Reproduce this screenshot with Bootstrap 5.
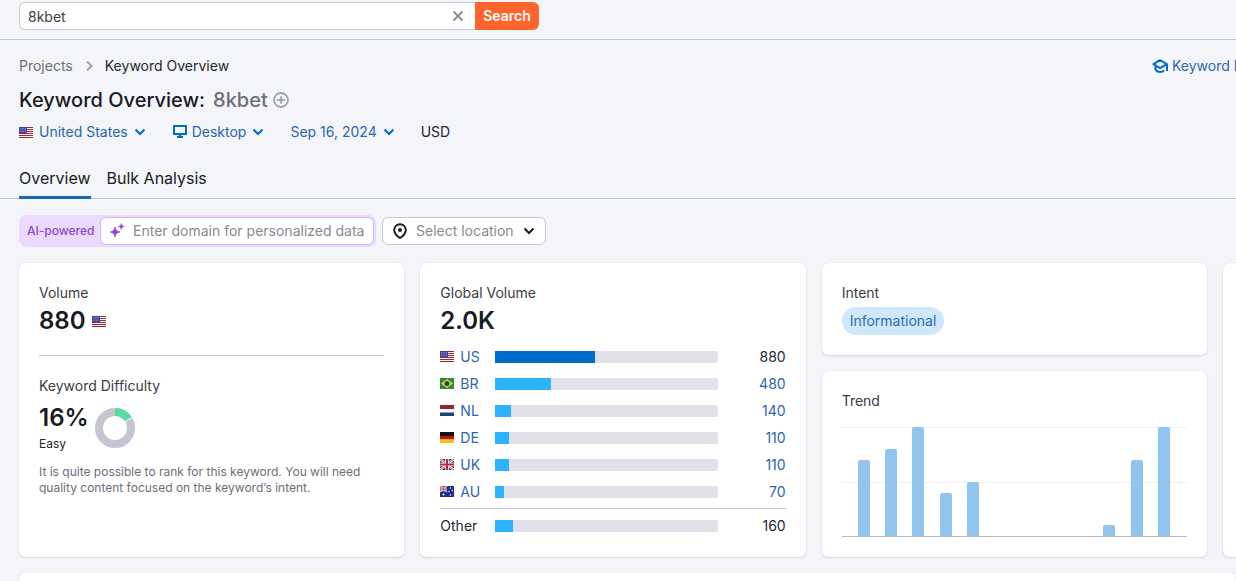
<!DOCTYPE html>
<html lang="en">
<head>
<meta charset="utf-8">
<meta name="viewport" content="width=device-width, initial-scale=1">
<title>Keyword Overview: 8kbet</title>
<link href="https://cdn.jsdelivr.net/npm/bootstrap@5.3.0/dist/css/bootstrap.min.css" rel="stylesheet">
<style>
  body { background: #f4f5f9; color: #25272f; font: 14px/20px Inter, "Liberation Sans", sans-serif; }
  a, .linkish { color: #2b66ae; text-decoration: none; }
  svg { flex: none; display: block; }
  .page-x { padding-left: 19px; }
  .topbar { border-bottom: 1px solid #c4c7cf; padding-top: 2px; padding-bottom: 9px; }
  .search-group { width: 520px; }
  .search-field { position: relative; flex: 1; }
  .search-field input { height: 28px; padding: 0 32px 0 8px; border: 1px solid #c4c7cf; border-right: 0; border-radius: 6px 0 0 6px; font-size: 14px; color: #3a3c45; width: 100%; background: #fff; outline: 0; }
  .clear-btn { position: absolute; right: 9px; top: 6px; color: #8a8e9b; }
  .plain-btn { border: 0; background: none; padding: 0; font-size: 14px; line-height: 20px; }
  .btn-search { background: #ff642d; color: #fff; height: 28px; width: 64px; border: 0; padding: 0; border-radius: 0 6px 6px 0; font-size: 14px; font-weight: 600; line-height: 20px; }
  .muted { color: #6c6e79; }
  .crumbs { padding-top: 16px; }
  .course-link { width: 84px; overflow: hidden; white-space: nowrap; }
  h1 { font-size: 20px; line-height: 24px; font-weight: 500; color: #191b23; }
  .filters { margin-top: 10px; }
  .filter-btn { margin-right: 26px; }
  .gap-after { margin-right: 6px; }
  .gap-before { margin-left: 6px; }
  .icon-blue { color: #006dca; }
  .tabs { border-bottom: 1px solid #c4c7cf; margin-top: 24px; gap: 16px; }
  .tabs a { color: #191b23; font-size: 16px; line-height: 24px; padding-bottom: 6px; margin-bottom: -1px; border-bottom: 3px solid transparent; }
  .tabs a.active { border-color: #1869b3; }
  .tools { padding-top: 16px; padding-bottom: 16px; gap: 6px; }
  .ai-box { background: #ecd9ff; border-radius: 8px; padding: 2px 2px 2px 8px; width: 357px; }
  .ai-label { font-size: 12px; font-weight: 500; color: #8649d1; width: 73px; line-height: 16px; margin-bottom: 1px; }
  .ai-field { background: #fff; border: 1px solid #d6b5f7; border-radius: 6px; height: 28px; padding: 0 7px 0 8px; }
  .ai-field input { border: 0; padding: 0; outline: 0; width: 100%; font-size: 14px; line-height: 20px; background: none; }
  .ai-field input::placeholder { color: #878a94; opacity: 1; }
  .location-btn { height: 28px; width: 164px; border: 1px solid #c4c7cf; border-radius: 6px; background: #fff; color: #878a94; padding: 0 10px 0 9px; font-size: 14px; }
  .widgets { gap: 16px; }
  .widget-col { flex: 0 0 calc((100% - 61px) / 3); }
  .panel { background: #fff; border-radius: 6px; padding: 20px; box-shadow: 0 0 1px rgba(25,27,35,.16), 0 1px 2px rgba(25,27,35,.12); }
  .panel h2 { font-size: 14px; line-height: 20px; font-weight: 400; color: #3a3c45; margin: 0; }
  .big-num { font-size: 24px; line-height: 28px; font-weight: 600; color: #191b23; }
  .rule { border-top: 1px solid #c4c7cf; margin-top: 20px; padding-top: 8px; }
  .small-text { font-size: 12px; line-height: 16px; }
  .countries { table-layout: fixed; width: 100%; margin-top: 8px; }
  .countries td, .countries th { height: 27px; padding: 0; font-weight: 400; vertical-align: middle; }
  .countries tfoot td, .countries tfoot th { height: 36px; border-top: 1px solid #c4c7cf; }
  .countries .spacer td { height: 3px; }
  .c-name { width: 55px; } .c-num { width: 68px; }
  .track { height: 12px; background: #e0e1e9; border-radius: 0 2px 2px 0; }
  .track div { height: 12px; background: #2bb3ff; }
  .track .own { background: #006dca; }
  .tag-info { background: #cfe8fc; border-radius: 14px; padding: 4px 8px; color: #2b6cb5; }
  .plot { height: 110px; margin-top: 16px; padding: 0 17px 0 16px; border-bottom: 1px solid #b9bcc6; background: linear-gradient(#f0f1f4, #f0f1f4) 0 0 / 100% 1px no-repeat, linear-gradient(#f0f1f4, #f0f1f4) 0 55px / 100% 1px no-repeat; }
  .plot div { width: 12px; background: #92c5ed; border-radius: 2px 2px 0 0; }
  .next-panel { border-radius: 6px 6px 0 0; padding: 0; margin-top: 16px; }
</style>
</head>
<body class="d-flex flex-column min-vh-100">
<svg width="0" height="0" class="position-absolute" aria-hidden="true">
  <symbol id="chev" viewBox="0 0 12 8"><path d="M1.500 1.500 6 6l4.500-4.500" fill="none" stroke="currentColor" stroke-width="2"/></symbol>
  <symbol id="us" viewBox="0 0 14 11"><path fill="#fff" d="M0 0h14v11H0z"/><path d="M0 .5h14M0 2.500h14M0 4.500h14M0 6.500h14M0 8.500h14M0 10.500h14" stroke="#a3242f"/><path fill="#3f43a8" d="M0 0h8v6H0z"/><path d="M1 1.500h6M1.500 3h6M1 4.500h6" stroke="#b9bce8" stroke-width=".6" stroke-dasharray=".8 .8"/></symbol>
</svg>

<header class="topbar page-x">
  <form class="search-group d-flex" onsubmit="return false">
    <div class="search-field">
      <input type="text" value="8kbet" aria-label="Keyword">
      <button type="button" class="plain-btn clear-btn" aria-label="Clear"><svg width="16" height="16" viewBox="0 0 16 16"><path d="m3.500 3.500 9 9m0-9-9 9" stroke="currentColor" stroke-width="2"/></svg></button>
    </div>
    <button class="btn-search">Search</button>
  </form>
</header>

<div class="page-x">
  <div class="crumbs d-flex align-items-center">
    <nav class="d-flex align-items-center" aria-label="Breadcrumb">
      <a href="#" class="muted">Projects</a>
      <svg class="mx-2" width="16" height="16" viewBox="0 0 16 16"><path d="m6 3.500 4.500 4.500L6 12.500" fill="none" stroke="#a0a3ae" stroke-width="2"/></svg>
      <span>Keyword Overview</span>
    </nav>
    <a href="#" class="course-link d-flex align-items-center ms-auto gap-1"><svg class="icon-blue" width="16" height="16" viewBox="0 0 16 16" fill="none" stroke="currentColor" stroke-width="2"><path d="M8 2 1.500 6.200 8 10.200l6.800-4L8 2Z" stroke-linejoin="round"/><path d="M3.500 8v3.500c1 1.800 2.500 2.500 4.500 2.500s3.300-.7 4-1.800M15 6.200V13"/></svg>Keyword R</a>
  </div>
  <h1 class="d-flex align-items-center mb-0 mt-2 pt-1">Keyword Overview:<span class="muted ms-2">8kbet</span>
    <button class="plain-btn ms-1" aria-label="Add keyword"><svg width="18" height="18" viewBox="0 0 18 18" fill="none" stroke="#a0a3ae"><circle cx="9" cy="9" r="7" stroke-width="1.800"/><path d="M9 5.200v7.600M5.200 9h7.600" stroke-width="1.800"/></svg></button>
  </h1>
  <div class="filters d-flex align-items-center">
    <button class="plain-btn linkish filter-btn d-flex align-items-center"><svg width="14" height="11" class="gap-after"><use href="#us"/></svg>United States<svg class="icon-blue gap-before" width="12" height="8"><use href="#chev"/></svg></button>
    <button class="plain-btn linkish filter-btn d-flex align-items-center"><svg class="icon-blue me-1" width="16" height="16" viewBox="0 0 16 16" fill="none" stroke="currentColor" stroke-width="2"><path d="M2 2h12v8H2z"/><path d="M5 13h6M8 10v3" stroke-width="2"/></svg>Desktop<svg class="icon-blue gap-before" width="12" height="8"><use href="#chev"/></svg></button>
    <button class="plain-btn linkish filter-btn d-flex align-items-center">Sep 16, 2024<svg class="icon-blue gap-before" width="12" height="8"><use href="#chev"/></svg></button>
    <span>USD</span>
  </div>
</div>

<nav class="tabs page-x d-flex">
  <a href="#" class="active">Overview</a>
  <a href="#">Bulk Analysis</a>
</nav>

<main class="page-x d-flex flex-column flex-grow-1 overflow-hidden">
  <div class="tools d-flex align-items-center">
    <div class="ai-box d-flex align-items-center">
      <label for="domain" class="ai-label">AI-powered</label>
      <div class="ai-field d-flex align-items-center flex-grow-1">
        <svg class="me-2" width="16" height="16" viewBox="0 0 16 16" fill="#8649d1"><path d="M6 4c.5 3 1.500 4.200 4.800 5C7.500 9.800 6.500 11 6 14c-.5-3-1.500-4.200-4.800-5C4.500 8.200 5.500 7 6 4Z" stroke="#8649d1" stroke-width=".8"/><path d="M12.200.5c.3 1.900 1 2.600 3 3-2 .4-2.700 1.100-3 3-.3-1.900-1-2.600-3-3 2-.4 2.700-1.100 3-3Z" stroke="#8649d1" stroke-width=".6"/></svg>
        <input id="domain" type="text" placeholder="Enter domain for personalized data">
      </div>
    </div>
    <button class="location-btn d-flex align-items-center"><svg class="me-2" width="16" height="16" viewBox="0 0 14 16"><path d="M7 1.200A5.800 5.800 0 0 0 1.200 7c0 3.200 2.400 5.800 5.800 8 3.400-2.200 5.800-4.800 5.800-8A5.800 5.800 0 0 0 7 1.200Z" fill="none" stroke="#191b23" stroke-width="2"/><circle cx="7" cy="7" r="2" fill="#191b23"/></svg>Select location<svg class="ms-auto" width="12" height="8" color="#191b23"><use href="#chev"/></svg></button>
  </div>

  <div class="widgets d-flex">
    <section class="widget-col panel">
      <h2>Volume</h2>
      <div class="d-flex align-items-center big-num mt-1">880<svg width="14" height="11" class="gap-before"><use href="#us"/></svg></div>
      <div class="rule"></div>
      <h2 class="mt-2 pt-1">Keyword Difficulty</h2>
      <div class="d-flex align-items-center mt-2">
        <div>
          <div class="big-num">16%</div>
          <div class="small-text mt-1">Easy</div>
        </div>
        <svg class="gap-before" width="40" height="40" viewBox="0 0 40 40" fill="none" stroke-width="8"><circle cx="20" cy="20" r="16" stroke="#c4c5d0"/><path d="M20 4a16 16 0 0 1 13.500 7.400" stroke="#59dba3"/><path d="m29.500 14 8-4.800" stroke="#fff" stroke-width="1"/></svg>
      </div>
      <p class="small-text muted mb-0 mt-2 pt-1">It is quite possible to rank for this keyword. You will need quality content focused on the keyword’s intent.</p>
    </section>

    <section class="widget-col panel pb-2">
      <h2>Global Volume</h2>
      <div class="big-num mt-1">2.0K</div>
      <table class="countries">
        <colgroup><col class="c-name"><col><col class="c-num"></colgroup>
        <tbody>
          <tr><th scope="row"><a href="#" class="d-flex align-items-center"><svg class="gap-after" width="14" height="11"><use href="#us"/></svg>US</a></th><td><div class="track"><div class="own" style="width:45%"></div></div></td><td class="text-end">880</td></tr>
          <tr><th scope="row"><a href="#" class="d-flex align-items-center"><svg class="gap-after" width="14" height="11" viewBox="0 0 14 11"><path fill="#2c8a35" d="M0 0h14v11H0z"/><path fill="#e3d54a" d="m7 1 6 4.500L7 10 1 5.500z"/><circle cx="7" cy="5.500" r="2.500" fill="#353c4c"/></svg>BR</a></th><td><div class="track"><div style="width:25%"></div></div></td><td class="text-end"><a href="#">480</a></td></tr>
          <tr><th scope="row"><a href="#" class="d-flex align-items-center"><svg class="gap-after" width="14" height="11" viewBox="0 0 14 11"><path fill="#fff" d="M0 0h14v11H0z"/><path fill="#9b2335" d="M0 0h14v4H0z"/><path fill="#25407c" d="M0 7.500h14V11H0z"/></svg>NL</a></th><td><div class="track"><div style="width:7%"></div></div></td><td class="text-end"><a href="#">140</a></td></tr>
          <tr><th scope="row"><a href="#" class="d-flex align-items-center"><svg class="gap-after" width="14" height="11" viewBox="0 0 14 11"><path fill="#111" d="M0 0h14v4H0z"/><path fill="#c8100b" d="M0 4h14v3.500H0z"/><path fill="#f2c40d" d="M0 7.500h14V11H0z"/></svg>DE</a></th><td><div class="track"><div style="width:6%"></div></div></td><td class="text-end"><a href="#">110</a></td></tr>
          <tr><th scope="row"><a href="#" class="d-flex align-items-center"><svg class="gap-after" width="14" height="11" viewBox="0 0 14 11"><path fill="#2b3578" d="M0 0h14v11H0z"/><path d="m0 0 14 11M14 0 0 11" stroke="#fff" stroke-width="2.200"/><path d="m0 0 14 11M14 0 0 11" stroke="#c02537" stroke-width=".8"/><path d="M7 0v11M0 5.500h14" stroke="#fff" stroke-width="3.600"/><path d="M7 0v11M0 5.500h14" stroke="#c02537" stroke-width="2"/></svg>UK</a></th><td><div class="track"><div style="width:6%"></div></div></td><td class="text-end"><a href="#">110</a></td></tr>
          <tr><th scope="row"><a href="#" class="d-flex align-items-center"><svg class="gap-after" width="14" height="11" viewBox="0 0 14 11"><path fill="#1d2f86" d="M0 0h14v11H0z"/><path d="m0 0 7 6M7 0 0 6M3.500 0v6M0 3h7" stroke="#e8c8d4" stroke-width="1.500"/><path d="M3.500 0v6M0 3h7" stroke="#c0394d" stroke-width=".8"/><g fill="#fff"><circle cx="3.500" cy="8.500" r="1"/><circle cx="10.500" cy="2" r=".7"/><circle cx="12.300" cy="4.500" r=".7"/><circle cx="9" cy="5.500" r=".7"/><circle cx="10.500" cy="9" r=".8"/></g></svg>AU</a></th><td><div class="track"><div style="width:4%"></div></div></td><td class="text-end"><a href="#">70</a></td></tr>
          <tr class="spacer" aria-hidden="true"><td colspan="3"></td></tr>
        </tbody>
        <tfoot>
          <tr><th scope="row">Other</th><td><div class="track"><div style="width:8%"></div></div></td><td class="text-end">160</td></tr>
        </tfoot>
      </table>
    </section>

    <div class="widget-col d-flex flex-column gap-3">
      <section class="panel">
        <h2>Intent</h2>
        <div class="d-flex mt-1"><span class="tag-info">Informational</span></div>
      </section>
      <section class="panel flex-grow-1">
        <h2>Trend</h2>
        <div class="plot d-flex align-items-end justify-content-between" role="img" aria-label="Monthly search trend">
          <div style="height:76px"></div><div style="height:87px"></div><div style="height:109px"></div><div style="height:43px"></div><div style="height:54px"></div><div style="height:0"></div><div style="height:0"></div><div style="height:0"></div><div style="height:0"></div><div style="height:11px"></div><div style="height:76px"></div><div style="height:109px"></div>
        </div>
      </section>
    </div>

    <section class="widget-col panel"></section>
  </div>
  <section class="panel next-panel flex-grow-1"></section>
</main>
<script src="https://cdn.jsdelivr.net/npm/bootstrap@5.3.0/dist/js/bootstrap.bundle.min.js"></script>
</body>
</html>
